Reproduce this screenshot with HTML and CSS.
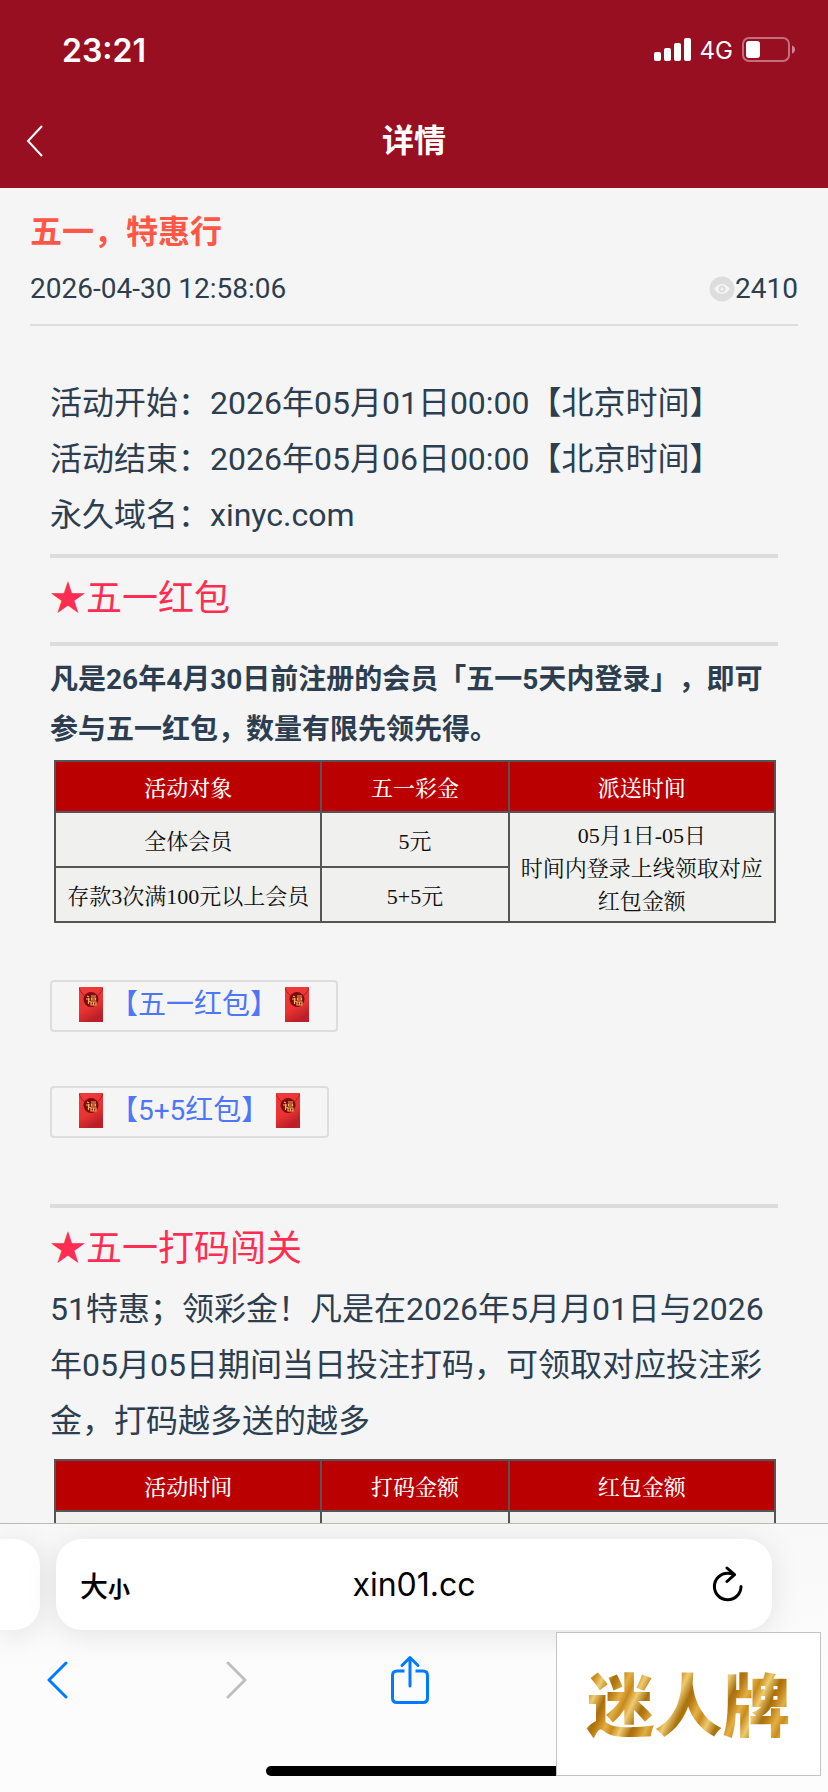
FILE: index.html
```html
<!DOCTYPE html>
<html lang="zh-CN">
<head>
  <meta charset="UTF-8" />
  <meta name="viewport" content="width=device-width, initial-scale=1" />
  <title>详情</title>
  <link rel="stylesheet" href="styles.css">
</head>
<body>
  <svg class="defs" aria-hidden="true">
    <defs>
      <linearGradient id="redPaper" x1="0" y1="0" x2="0.4" y2="1">
        <stop offset="0" stop-color="#f23b3b" />
        <stop offset="0.65" stop-color="#e93232" />
        <stop offset="1" stop-color="#bb2028" />
      </linearGradient>
      <symbol id="envelope" viewBox="0 0 24 35">
        <rect width="24" height="35" fill="url(#redPaper)" />
        <path d="M0 1C2 6 5 9 9 11H15C19 9 22 6 24 1" fill="none" stroke="#b01c22" stroke-width="1" />
        <circle cx="12" cy="12.500" r="7.500" fill="#7d0a10" />
        <path d="M8 9l2 1M7 12h4M9.500 11v6M10 14l2 1M12 9h5M12.500 11h4v2h-4zM12 15h5v3h-5zM14.500 15v3" fill="none" stroke="#f0b350" stroke-width="1.200" />
      </symbol>
    </defs>
  </svg>

  <header class="header">
    <div class="status">
      <span class="clock">23:21</span>
      <div class="signal">
        <svg width="37" height="24" viewBox="0 0 37 24" fill="#fff" aria-hidden="true">
          <rect x="0" y="14" width="7" height="9" rx="2" />
          <rect x="10" y="10" width="7" height="13" rx="2" />
          <rect x="20" y="5" width="7" height="18" rx="2" />
          <rect x="30" y="0" width="7" height="23" rx="2" />
        </svg>
        <span>4G</span>
        <svg width="54" height="26" viewBox="0 0 54 26" aria-hidden="true">
          <rect x="1" y="1" width="46" height="23" rx="6" fill="none" stroke="#fff" stroke-opacity="0.400" stroke-width="2" />
          <rect x="4" y="4" width="14" height="17" rx="3" fill="#fff" />
          <path d="M50 8.500q3 1 3 4t-3 4z" fill="#fff" fill-opacity="0.500" />
        </svg>
      </div>
    </div>
    <nav class="navbar">
      <button type="button" class="nav-back" aria-label="返回">
        <svg width="18" height="32" viewBox="0 0 18 32" fill="none" stroke="#fff" stroke-width="2"><path d="M16 1L2 16L16 31" /></svg>
      </button>
      <h1>详情</h1>
    </nav>
  </header>

  <main class="page">
    <div class="article-head">
      <h2>五一，特惠行</h2>
      <div class="meta">
        <time>2026-04-30 12:58:06</time>
        <span class="views">
          <svg width="26" height="26" viewBox="0 0 26 26" aria-hidden="true">
            <circle cx="13" cy="13" r="12.500" fill="#ddd" />
            <path d="M5 13q8-10 16 0q-8 10-16 0z" fill="#f5f5f5" />
            <circle cx="13" cy="13" r="3.500" fill="#ddd" />
            <circle cx="13" cy="13" r="1.500" fill="#f5f5f5" />
          </svg>2410</span>
      </div>
    </div>

    <article class="content">
      <p>活动开始：2026年05月01日00:00【北京时间】</p>
      <p>活动结束：2026年05月06日00:00【北京时间】</p>
      <p>永久域名：xinyc.com</p>
      <hr>
      <h3>★五一红包</h3>
      <hr>
      <p class="rule">凡是26年4月30日前注册的会员「五一5天内登录」，即可参与五一红包，数量有限先领先得。</p>

      <table class="bonus">
        <thead>
          <tr><th>活动对象</th><th class="mid">五一彩金</th><th>派送时间</th></tr>
        </thead>
        <tbody>
          <tr><td>全体会员</td><td>5元</td><td rowspan="2">05月1日-05日<br>时间内登录上线领取对应<br>红包金额</td></tr>
          <tr><td>存款3次满100元以上会员</td><td>5+5元</td></tr>
        </tbody>
      </table>

      <div class="links">
        <a href="#hongbao"><svg class="env"><use href="#envelope" /></svg>【五一红包】<svg class="env"><use href="#envelope" /></svg></a>
        <a href="#hongbao5"><svg class="env"><use href="#envelope" /></svg>【5+5红包】<svg class="env"><use href="#envelope" /></svg></a>
      </div>

      <hr>
      <h3>★五一打码闯关</h3>
      <p>51特惠；领彩金！凡是在2026年5月月01日与2026年05月05日期间当日投注打码，可领取对应投注彩金，打码越多送的越多</p>

      <table class="bonus">
        <thead>
          <tr><th>活动时间</th><th class="mid">打码金额</th><th>红包金额</th></tr>
        </thead>
        <tbody>
          <tr><td></td><td></td><td></td></tr>
        </tbody>
      </table>
    </article>
  </main>

  <footer class="browser">
    <div class="tabs">
      <div class="prev-tab"></div>
      <form class="address">
        <button type="button" class="text-size" aria-label="文字大小">大<small>小</small></button>
        <input type="text" value="xin01.cc" aria-label="网址">
        <button type="button" aria-label="刷新">
          <svg width="32" height="38" viewBox="0 0 32 38" fill="none" stroke="#000" stroke-width="3" stroke-linecap="round" stroke-linejoin="round">
            <path d="M21.500 8.500Q18.500 7.200 15.700 7.200A13.300 13.300 0 1 0 29 20.500" />
            <path d="M15 2L22.500 8.700L15 15.500" />
          </svg>
        </button>
      </form>
    </div>
    <div class="tools">
      <button type="button" aria-label="后退">
        <svg width="22" height="38" viewBox="0 0 22 38" fill="none" stroke="#007aff" stroke-width="3" stroke-linecap="round" stroke-linejoin="round"><path d="M20 2L3 19L20 36" /></svg>
      </button>
      <button type="button" aria-label="前进" disabled>
        <svg width="22" height="38" viewBox="0 0 22 38" fill="none" stroke="#bfbfbf" stroke-width="3" stroke-linecap="round" stroke-linejoin="round"><path d="M2 2L19 19L2 36" /></svg>
      </button>
      <button type="button" aria-label="分享">
        <svg width="40" height="50" viewBox="0 0 40 50" fill="none" stroke="#007aff" stroke-width="3" stroke-linecap="round" stroke-linejoin="round">
          <path d="M14.500 16H7Q2.500 16 2.500 20.500V43Q2.500 47.500 7 47.500H33Q37.500 47.500 37.500 43V20.500Q37.500 16 33 16H25.500" stroke-linecap="butt" />
          <path d="M20 31V3M12 10.500L20 2.500L28 10.500" />
        </svg>
      </button>
    </div>
    <div class="home-bar"></div>
    <div class="brand"><span>迷人牌</span></div>
  </footer>
</body>
</html>
```
FILE: styles.css
```css
* {
  box-sizing: border-box;
}
body {
  margin: 0;
  height: 100vh;
  display: flex;
  flex-direction: column;
  overflow: hidden;
  background: #f5f5f5;
  color: #2c3e50;
  font-family: Roboto, "Noto Sans CJK SC", sans-serif;
  font-size: 32px;
  text-spacing-trim: space-all;
}
button {
  display: flex;
  align-items: center;
  padding: 0;
  border: none;
  background: none;
  color: inherit;
  font: inherit;
}
svg {
  display: block;
}
.defs {
  position: absolute;
  width: 0;
  height: 0;
}

/* header */
.header {
  flex: none;
  background: #980f21;
  color: #fff;
}
.status {
  display: flex;
  justify-content: space-between;
  align-items: center;
  height: 100px;
  padding: 0 32px 0 62px;
  font-family: Inter, sans-serif;
}
.clock {
  font-size: 32px;
  font-weight: 600;
}
.signal {
  display: flex;
  align-items: center;
  gap: 9px;
  font-size: 24px;
}
.navbar {
  display: grid;
  grid-template-columns: 1fr auto 1fr;
  align-items: center;
  height: 88px;
  padding: 0 26px 6px;
}
.navbar h1 {
  margin: 0;
  font-size: 32px;
  line-height: 48px;
}

/* article */
.page {
  flex: 1;
  min-height: 0;
  overflow: hidden;
  padding: 20px 30px 0;
}
.article-head {
  border-bottom: 2px solid #ddd;
  height: 118px;
}
.article-head h2 {
  margin: 0;
  color: #ff5645;
  font-size: 32px;
  line-height: 48px;
}
.meta {
  display: flex;
  justify-content: space-between;
  margin-top: 13px;
  font-size: 28px;
  line-height: 40px;
}
.views {
  display: flex;
  align-items: center;
}
.content {
  padding: 49px 20px 0;
}
.content p {
  margin: 0;
  line-height: 56px;
}
.content hr {
  height: 4px;
  margin: 11px 0;
  border: none;
  background: #dcdcdc;
}
.content h3 {
  margin: 0;
  padding-bottom: 2px;
  color: #ff2d51;
  font-size: 36px;
  font-weight: 400;
  line-height: 60px;
}
.content .rule {
  margin-top: -2px;
  font-size: 28px;
  font-weight: 700;
  line-height: 50px;
}
.bonus {
  width: calc(100% - 6px);
  margin: 10px 0 0 4px;
  border-collapse: collapse;
  table-layout: fixed;
  background: #f0f0ee;
  color: #111;
  font-family: "Liberation Serif", "Noto Serif CJK SC", "Noto Sans CJK SC", serif;
  font-size: 22px;
  line-height: 33px;
}
.rule + .bonus {
  margin-top: 5px;
}
.bonus th, .bonus td {
  height: 55px;
  padding: 3px 0 0;
  border: 2px solid #555;
  text-align: center;
}
.bonus th {
  height: 51px;
  background: #ba0000;
  color: #fff;
  font-weight: 500;
}
.bonus .mid {
  width: 26%;
}
.links {
  display: flex;
  flex-direction: column;
  align-items: flex-start;
  gap: 54px;
  padding: 57px 0 55px;
}
.links a {
  display: flex;
  align-items: center;
  gap: 7px;
  height: 52px;
  padding: 0 27px 3px;
  border: 2px solid #ddd;
  border-radius: 4px;
  color: #4d76f8;
  font-size: 28px;
  line-height: 40px;
  text-decoration: none;
}
.env {
  width: 24px;
  height: 35px;
}

/* browser bar */
.browser {
  position: relative;
  flex: none;
  height: 269px;
  padding-top: 15px;
  border-top: 1px solid #bbb;
  background: linear-gradient(#f8f8f8, #fcfcfc 60%);
  font-family: Inter, "Noto Sans CJK SC", sans-serif;
}
.tabs {
  display: flex;
  gap: 16px;
  padding-right: 56px;
}
.prev-tab {
  width: 40px;
  border-radius: 0 26px 26px 0;
  background: #fff;
  box-shadow: 0 4px 30px rgba(0, 0, 0, 0.1);
}
.address {
  display: flex;
  align-items: center;
  flex: 1;
  height: 91px;
  padding: 0 28px 0 24px;
  border-radius: 26px;
  background: #fff;
  color: #000;
  box-shadow: 0 4px 30px rgba(0, 0, 0, 0.1);
}
.address input {
  flex: 1;
  min-width: 0;
  padding: 0 14px 0 0;
  border: none;
  background: none;
  font: inherit;
  text-align: center;
}
.text-size {
  align-items: baseline;
  font-size: 28px;
  font-weight: 500;
}
.text-size small {
  font-size: 22px;
  font-weight: 700;
}
.tools {
  display: grid;
  grid-template-columns: 23% 21% auto;
  align-items: center;
  height: 100px;
  padding-left: 46px;
}
.home-bar {
  width: 296px;
  height: 10px;
  margin: 36px auto 0;
  border-radius: 5px;
  background: #000;
}
.brand {
  position: absolute;
  right: 7px;
  bottom: 16px;
  display: flex;
  align-items: center;
  justify-content: center;
  width: 265px;
  height: 144px;
  padding-bottom: 4px;
  border: 1px solid #c4c4c4;
  background: #fff;
}
.brand span {
  background: repeating-linear-gradient(115deg, #b97a12 0, #e3b044 9px, #c98a1c 16px, #efcb70 24px, #a8700f 34px, #b97a12 38px);
  background-clip: text;
  -webkit-background-clip: text;
  color: transparent;
  font-family: "Noto Sans CJK SC", sans-serif;
  font-size: 68px;
  font-weight: 900;
  line-height: 90px;
}
```
